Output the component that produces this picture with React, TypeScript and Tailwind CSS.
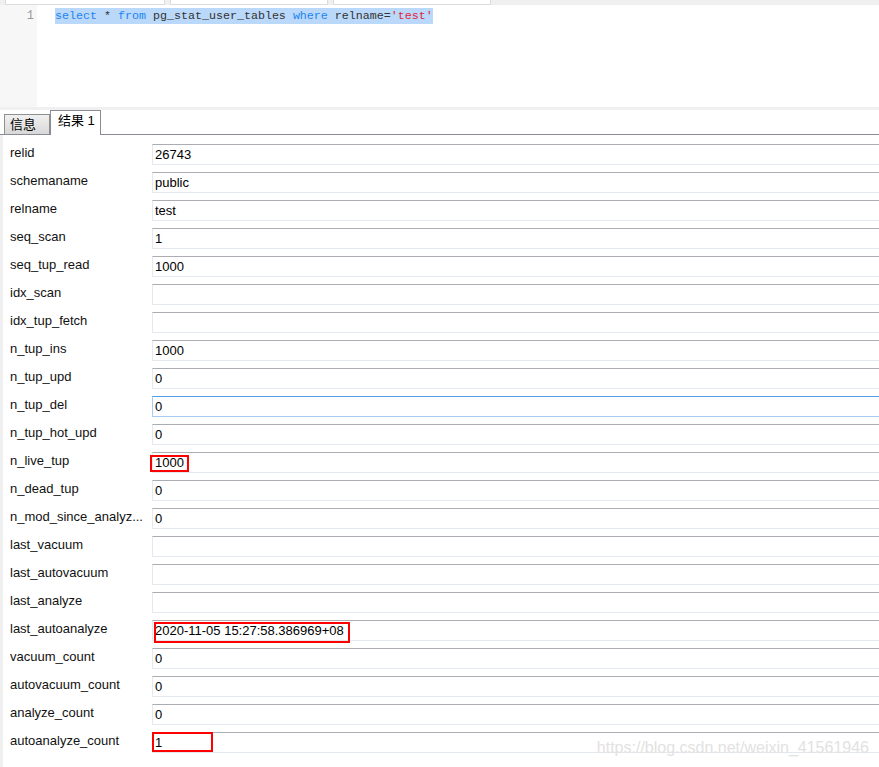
const rows: { label: string; value: string; mark?: 'short' | 'long' | 'tiny'; focus?: boolean }[] = [
  { label: 'relid', value: '26743' },
  { label: 'schemaname', value: 'public' },
  { label: 'relname', value: 'test' },
  { label: 'seq_scan', value: '1' },
  { label: 'seq_tup_read', value: '1000' },
  { label: 'idx_scan', value: '' },
  { label: 'idx_tup_fetch', value: '' },
  { label: 'n_tup_ins', value: '1000' },
  { label: 'n_tup_upd', value: '0' },
  { label: 'n_tup_del', value: '0', focus: true },
  { label: 'n_tup_hot_upd', value: '0' },
  { label: 'n_live_tup', value: '1000', mark: 'short' },
  { label: 'n_dead_tup', value: '0' },
  { label: 'n_mod_since_analyz...', value: '0' },
  { label: 'last_vacuum', value: '' },
  { label: 'last_autovacuum', value: '' },
  { label: 'last_analyze', value: '' },
  { label: 'last_autoanalyze', value: '2020-11-05 15:27:58.386969+08', mark: 'long' },
  { label: 'vacuum_count', value: '0' },
  { label: 'autovacuum_count', value: '0' },
  { label: 'analyze_count', value: '0' },
  { label: 'autoanalyze_count', value: '1', mark: 'tiny' },
]

const uiFont = { fontFamily: '"Liberation Sans", "Noto Sans CJK SC", sans-serif' }
const mono = { fontFamily: '"Liberation Mono", monospace' }

function Row({ label, value, mark, focus }: (typeof rows)[number]) {
  return (
    <div className="flex h-[28px]">
      <div className="w-[149px] pl-[7px] text-[13px] leading-[18px] text-[#111]">{label}</div>
      <div
        className={
          focus
            ? 'relative flex-1 h-[21px] border border-r-0 border-[#a9cdf1] border-t-[#569de5] bg-white'
            : 'relative flex-1 h-[21px] border border-r-0 border-[#e3e9ef] border-t-[#abadb3] bg-white'
        }
      >
        <div className="pl-[2px] text-[13px] leading-[19px] text-black">{value}</div>
        {mark === 'short' && (
          <div className="absolute left-[-3px] top-[2px] w-[39px] h-[17px] border-2 border-[#f00]" />
        )}
        {mark === 'long' && (
          <div className="absolute left-[1px] top-[1px] w-[196px] h-[21px] border-2 border-[#f00]" />
        )}
        {mark === 'tiny' && (
          <div className="absolute left-[-1px] top-[-1px] w-[61px] h-[20px] border-2 border-[#f00]" />
        )}
      </div>
    </div>
  )
}

export default function App() {
  return (
    <div className="w-[879px] h-[767px] overflow-hidden bg-white flex flex-col" style={uiFont}>
      {/* top tab strip */}
      <div className="h-[5px] bg-[#f0f0f0] flex items-end gap-[5px] pl-[5px]">
        <div className="w-[160px] h-[5px] bg-white border border-t-0 border-[#dcdcdc]" />
        <div className="w-[158px] h-[5px] bg-white border border-t-0 border-[#dcdcdc]" />
        <div className="w-[158px] h-[5px] bg-white border border-t-0 border-[#dcdcdc]" />
      </div>

      {/* editor */}
      <div className="h-[102px] flex">
        <div className="w-[37px] bg-[#f7f7f7] pt-[3px] pr-[3px] text-right text-[12px] leading-[16px] text-[#999]" style={mono}>
          1
        </div>
        <div className="flex-1 pt-[3px] pl-[18px] flex items-start">
          <div className="bg-[#bad8f9] text-[11.67px] leading-[16px] text-[#333] whitespace-pre" style={mono}>
            <span className="text-[#1d84f0]">select</span> * <span className="text-[#1d84f0]">from</span> pg_stat_user_tables{' '}
            <span className="text-[#1d84f0]">where</span> relname=<span className="text-[#e0263c]">'test'</span>
          </div>
        </div>
      </div>

      <div className="h-[3px] bg-[#f0f0f0]" />

      {/* result tabs */}
      <div className="h-[25px] flex items-end border-b border-[#898c95] pl-[4px]">
        <div className="w-[46px] h-[20px] border border-b-0 border-[#8e8f8f] bg-gradient-to-b from-[#f0f0f0] to-[#d8d8d8] text-[13px] leading-[19px] pl-[5px] text-black">
          信息
        </div>
        <div className="w-[51px] h-[25px] -mb-px border border-b-0 border-[#898c95] bg-white text-[13px] leading-[20px] pl-[7px] text-black">
          结果 1
        </div>
      </div>

      {/* record view */}
      <div className="flex-1 flex">
        <div className="w-[3px] bg-[#f0f0f0]" />
        <div className="flex-1 pt-[9px] relative">
          {rows.map(r => (
            <Row key={r.label} {...r} />
          ))}
          <div className="absolute right-[10px] top-[603px] text-[16px] leading-[20px] text-[#e2e2e2]">
            https://blog.csdn.net/weixin_41561946
          </div>
        </div>
      </div>
    </div>
  )
}
